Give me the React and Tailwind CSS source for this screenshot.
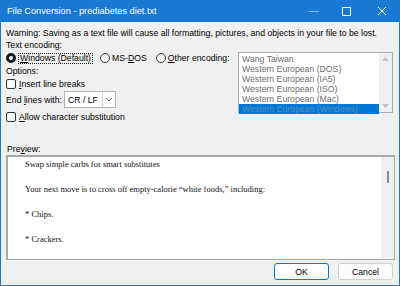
import React from 'react'

const ui = { fontFamily: '"Liberation Sans", Arial, sans-serif' }
const serif = { fontFamily: '"Liberation Serif", "Times New Roman", serif' }

function Radio({ checked }) {
  return checked ? (
    <span className="inline-block w-[10px] h-[10px] rounded-full border-[3px] border-[#1b1b1b] bg-white shrink-0" />
  ) : (
    <span className="inline-block w-[10px] h-[10px] rounded-full border border-[#333] bg-white shrink-0" />
  )
}

function Check() {
  return <span className="inline-block w-[10px] h-[10px] rounded-[2px] border border-[#333] bg-white shrink-0" />
}

const encodings = [
  'Wang Taiwan',
  'Western European (DOS)',
  'Western European (IA5)',
  'Western European (ISO)',
  'Western European (Mac)',
  'Western European (Windows)',
]

export default function App() {
  return (
    <div className="w-[400px] h-[286px] bg-[#1979d3] flex flex-col overflow-hidden text-[8.7px] leading-[12px] text-black whitespace-nowrap" style={ui}>
      {/* title bar */}
      <div className="h-[22px] flex items-center text-white text-[9.2px]">
        <span className="ml-[7px] flex-1">File Conversion - prediabetes diet.txt</span>
        <span className="w-[10px] h-[1px] bg-[#8cbcea] mr-[23px]" />
        <span className="w-[9px] h-[9px] border border-white mr-[26px]" />
        <svg width="10" height="10" viewBox="0 0 10 10" className="mr-[13px]">
          <path d="M1 1 L9 9 M9 1 L1 9" stroke="white" strokeWidth="1" />
        </svg>
      </div>

      {/* body */}
      <div className="flex-1 bg-[#f0f0f0] mx-[1px] mb-[1px] flex flex-col pt-[5px] px-[5px]">
        <div className="h-[12px]">Warning: Saving as a text file will cause all formatting, pictures, and objects in your file to be lost.</div>
        <div className="h-[12px]">Text encoding:</div>

        <div className="flex items-start mt-[1px]">
          <div className="w-[232px] flex flex-col">
            <div className="h-[12px] flex items-center">
              <Radio checked />
              <span className="ml-[2px] px-[1px] border border-dotted border-[#222] leading-[9px]"><span className="underline">W</span>indows (Default)</span>
              <span className="ml-[7px] flex"><Radio /></span>
              <span className="ml-[2px]">MS-<span className="underline">D</span>OS</span>
              <span className="ml-[9px] flex"><Radio /></span>
              <span className="ml-[2px]"><span className="underline">O</span>ther encoding:</span>
            </div>
            <div className="h-[12px] mt-[1px]">Options:</div>
            <div className="h-[12px] mt-[1px] flex items-center">
              <Check />
              <span className="ml-[3px]"><span className="underline">I</span>nsert line breaks</span>
            </div>
            <div className="h-[17px] mt-[1px] flex items-center">
              <span className="w-[58px]">End <span className="underline">l</span>ines with:</span>
              <div className="w-[52px] h-[17px] bg-white border border-[#b5b5b5] flex items-center">
                <span className="flex-1 pl-[3px]">CR / LF</span>
                <span className="w-[1px] h-full bg-[#d5d5d5]" />
                <svg width="12" height="15" viewBox="0 0 12 15">
                  <path d="M3 6 L6 9 L9 6" stroke="#666" strokeWidth="1" fill="none" />
                </svg>
              </div>
            </div>
            <div className="h-[12px] mt-[3px] flex items-center">
              <Check />
              <span className="ml-[3px]"><span className="underline">A</span>llow character substitution</span>
            </div>
          </div>

          {/* encoding list */}
          <div className="w-[155px] h-[61px] border border-[#adadad] bg-white flex">
            <div className="flex-1 flex flex-col pt-[1px] text-[#6d6d6d] leading-[10px]">
              {encodings.map((e, i) => (
                <div key={e} className={i === 5 ? 'pl-[3px] h-[10px] bg-[#0078d7] text-[#5a8fc0]' : 'pl-[3px] h-[10px]'}>{e}</div>
              ))}
            </div>
            <div className="w-[13px] bg-[#f0f0f0] flex flex-col justify-between items-center py-[4px]">
              <svg width="7" height="4" viewBox="0 0 7 4"><path d="M0 4 L3.5 0 L7 4 Z" fill="#c2c2c2" /></svg>
              <svg width="7" height="4" viewBox="0 0 7 4"><path d="M0 0 L3.5 4 L7 0 Z" fill="#c2c2c2" /></svg>
            </div>
          </div>
        </div>

        <div className="h-[12px] mt-[20px] ml-[1px]">Pre<span className="underline">v</span>iew:</div>

        {/* preview */}
        <div className="h-[105px] mr-[-1px] border border-[#a8a8a8] border-t-2 border-l-2 bg-white flex">
          <div className="flex-1 pl-[17px] pt-[1px] text-[8.5px] leading-[12.5px] text-[#111]" style={serif}>
            <div>Swap simple carbs for smart substitutes</div>
            <div className="h-[12.5px]" />
            <div>Your next move is to cross off empty-calorie “white foods,” including:</div>
            <div className="h-[12.5px]" />
            <div>* Chips.</div>
            <div className="h-[12.5px]" />
            <div>* Crackers.</div>
          </div>
          <div className="w-[13px] bg-[#f0f0f0] flex justify-center pt-[14px]">
            <span className="w-[2px] h-[12px] bg-[#8a8a8a]" />
          </div>
        </div>

        <div className="flex justify-end gap-[9px] mt-[3px] mr-[1px]">
          <button className="w-[55px] h-[17px] rounded-[3px] border border-[#0078d7] bg-[#fdfdfd] text-[8.7px]" style={ui}>OK</button>
          <button className="w-[55px] h-[17px] rounded-[3px] border border-[#d0d0d0] bg-[#fdfdfd] text-[8.7px]" style={ui}>Cancel</button>
        </div>
      </div>
    </div>
  )
}
